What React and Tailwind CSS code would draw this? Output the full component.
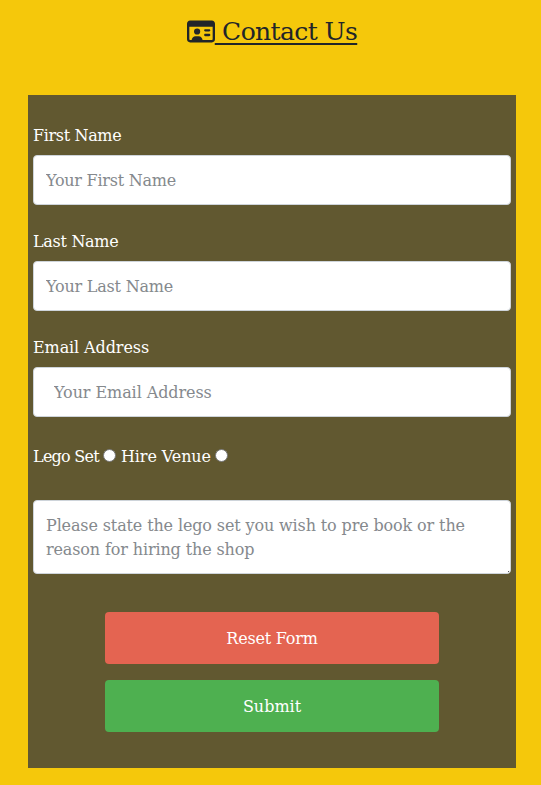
import { FaRegIdCard } from "react-icons/fa6";

const field =
  "block w-full rounded border border-[#ced4da] bg-white text-[16px] leading-6 text-[#495057] placeholder:text-[#85898d] placeholder:opacity-100 outline-none";

function Field({ label, labelClass, inputClass, placeholder, type = "text" }) {
  return (
    <div>
      <label className={`mb-[7px] block h-6 whitespace-nowrap leading-6 ${labelClass}`}>{label}</label>
      <input type={type} placeholder={placeholder} className={`${field} h-[50px] ${inputClass}`} />
    </div>
  );
}

function Radio() {
  return <input type="radio" name="reason" className="m-0 mb-px size-[13px] shrink-0 appearance-none rounded-full border border-[#767676] bg-white" />;
}

export default function App() {
  return (
    <main className="h-[785px] w-[541px] overflow-hidden bg-[#f5c80b] pl-7 font-['DejaVu_Serif',serif] text-[16px]">
      <h1 className="flex h-[95px] w-[488px] items-start justify-center pt-[15px] text-[25px] leading-[34px] text-[#212529]">
        <FaRegIdCard className="mt-[4px] h-[25px] w-[28px] shrink-0" />
        <span className="whitespace-pre tracking-[-0.6px] underline decoration-2 underline-offset-[3px]"> Contact Us</span>
      </h1>
      <form className="h-[673px] w-[488px] bg-[#615830] px-[5px] pt-[29px] text-white">
        <div className="flex flex-col gap-[25px]">
          <Field label="First Name" labelClass="tracking-[-0.35px]" inputClass="px-3 tracking-[-0.25px]" placeholder="Your First Name" />
          <Field label="Last Name" labelClass="tracking-[-0.3px]" inputClass="px-3 tracking-[-0.2px]" placeholder="Your Last Name" />
          <Field label="Email Address" labelClass="tracking-[-0.1px]" inputClass="px-5 tracking-[-0.08px]" placeholder="Your Email Address" type="email" />
        </div>
        <div className="mt-[27px] flex h-6 items-center whitespace-nowrap leading-6">
          <span className="w-[70px] pt-0.5 tracking-[-0.75px]">Lego Set</span>
          <Radio />
          <span className="ml-[5px] w-[94px] pt-0.5 tracking-[-0.1px]">Hire Venue</span>
          <Radio />
        </div>
        <div className="relative mt-8">
          <textarea
            className={`${field} h-[74px] resize-none overflow-hidden px-3 pt-[13px] pb-[11px] tracking-[-0.13px]`}
            placeholder="Please state the lego set you wish to pre book or the reason for hiring the shop"
          />
          <span className="absolute right-[2px] bottom-[2px] size-px bg-[#555]" />
        </div>
        <div className="mx-auto mt-[38px] flex w-[334px] flex-col gap-4">
          <button type="reset" className="h-[52px] rounded bg-[#e46451] pt-0.5 tracking-[-0.2px]">Reset Form</button>
          <button type="button" className="h-[52px] rounded bg-[#4eb050] pt-0.5">Submit</button>
        </div>
      </form>
    </main>
  );
}
